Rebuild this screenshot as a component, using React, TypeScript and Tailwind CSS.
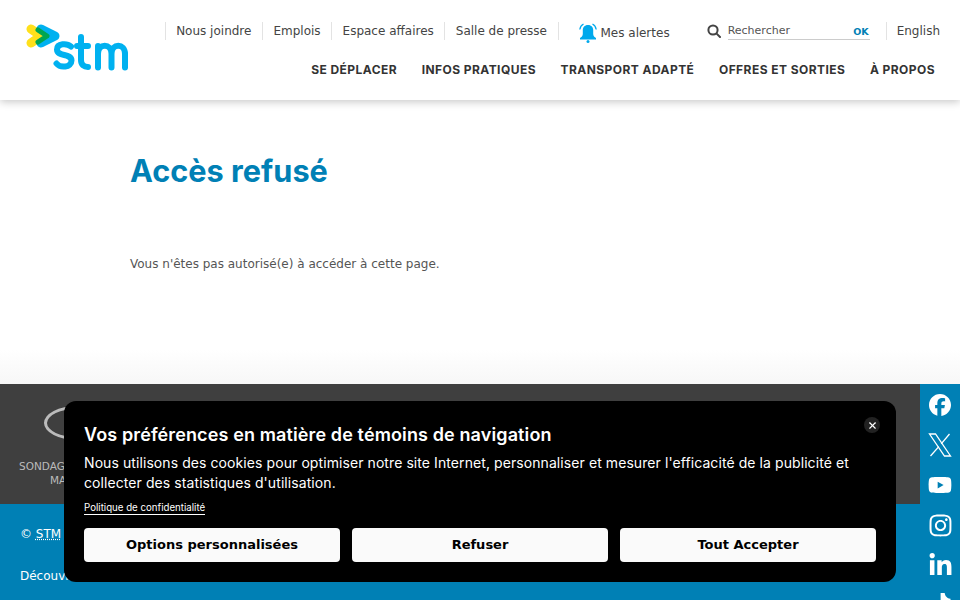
import { FaFacebook, FaInstagram, FaLinkedinIn, FaTiktok, FaYoutube } from 'react-icons/fa6'
import { X } from 'lucide-react'

const sans = 'font-["DejaVu_Sans",sans-serif]'

const topLinks = ['Nous joindre', 'Emplois', 'Espace affaires', 'Salle de presse']
const mainLinks = ['SE DÉPLACER', 'INFOS PRATIQUES', 'TRANSPORT ADAPTÉ', 'OFFRES ET SORTIES', 'À PROPOS']

function Logo() {
  return (
    <svg width="104" height="50" viewBox="0 0 104 50" className="shrink-0" fill="none" strokeLinecap="round" strokeLinejoin="round">
      <path d="M6 7 L16 14 L6 21" stroke="#ffe01b" strokeWidth="9" />
      <path d="M16 7 L30 14 L16 21" stroke="#00b1f0" strokeWidth="9" />
      <path d="M13 8 L22 14 L13 20" stroke="#00a651" strokeWidth="5" />
      <g stroke="#00b1f0" strokeWidth="6">
        <path d="M46 24.5 C42 21 32 21 32 27.5 C32 35 46.5 31 46.5 38.5 C46.5 46 35 46 31.5 41.5" />
        <path d="M56 15 L56 38 C56 43 59 45 63 45 M52 24 L63 24" />
        <path d="M73 45.5 L73 24 M73 32 C73 21 86.5 21 86.5 32 L86.5 45.5 M86.5 32 C86.5 21 100 21 100 32 L100 45.5" />
      </g>
    </svg>
  )
}

function Bell() {
  return (
    <svg width="18" height="20" viewBox="0 0 18 20" fill="#00a9ec">
      <path d="M9 2 C5.5 2 3.8 4.5 3.8 7 L3.8 11 C3.8 13 2.5 14 1 15 L1 16.5 L17 16.5 L17 15 C15.5 14 14.2 13 14.2 11 L14.2 7 C14.2 4.5 12.5 2 9 2 Z" />
      <circle cx="9" cy="18.5" r="1.5" />
      <path d="M4.5 1 C2.5 2 1.2 4 .8 6.5 M13.5 1 C15.5 2 16.8 4 17.2 6.5" fill="none" stroke="#00a9ec" strokeWidth="1.3" />
    </svg>
  )
}

function SearchIcon() {
  return (
    <svg width="14" height="14" viewBox="0 0 14 14" fill="none" stroke="#444" strokeWidth="2" strokeLinecap="round" className="ml-[37px] shrink-0">
      <circle cx="6" cy="6" r="4.6" />
      <path d="M9.6 9.6 L13 13" />
    </svg>
  )
}

function XLogo() {
  return (
    <svg width="24" height="24" viewBox="0 0 24 24" fill="none" stroke="#fff" strokeWidth="1.3">
      <path d="M1.5 1 L7.5 1 L22.5 23 L16.5 23 Z" />
      <path d="M21.5 1 L13.2 10.8 M10.8 13.6 L2.5 23" />
    </svg>
  )
}

const socials = [
  <FaFacebook key="facebook" size={22} />,
  <XLogo key="x" />,
  <FaYoutube key="youtube" size={24} />,
  <FaInstagram key="instagram" size={25} />,
  <FaLinkedinIn key="linkedin" size={25} />,
  <FaTiktok key="tiktok" size={24} />,
]

export default function App() {
  return (
    <div className={`relative h-[600px] w-[960px] overflow-hidden bg-white ${sans}`}>
      <header className="relative z-10 flex h-[100px] justify-between bg-white pl-[25px] pr-5 pt-[22px] shadow-[0_2px_8px_rgba(0,0,0,0.22)]">
        <Logo />
        <div className="flex flex-col items-end">
          <div className="flex h-[18px] items-center text-[12px] text-[#444]">
            {topLinks.map((link, i) => (
              <span key={link} className={`flex h-[18px] items-center border-l border-[#e3e3e3] px-[10.5px] ${i === 3 ? 'border-r' : ''}`}>
                {link}
              </span>
            ))}
            <span className="ml-5 mt-[3px] flex items-center gap-1">
              <Bell />
              Mes alertes
            </span>
            <SearchIcon />
            <div className="ml-[7px] flex h-[18px] w-[142px] items-center justify-between border-b border-[#ccc] text-[11px] text-[#555]">
              <span className="mt-[1px]">Rechercher</span>
              <span className="mt-[3px] pr-[1px] text-[9.5px] font-bold text-[#0080b5]">OK</span>
            </div>
            <span className="ml-4 flex h-[18px] items-center border-l border-[#e3e3e3] pl-[10px]">English</span>
          </div>
          <nav className='mt-[21px] flex gap-[24.6px] pr-[5px] font-["Inter",sans-serif] text-[12px] font-bold tracking-[0.44px] text-[#333]'>
            {mainLinks.map((link) => (
              <span key={link}>{link}</span>
            ))}
          </nav>
        </div>
      </header>

      <main className="h-[284px] bg-gradient-to-b from-white from-[88%] to-[#f7f7f7] pl-[130px] pt-[50px]">
        <h1 className='font-["Inter",sans-serif] text-[30.7px] font-bold leading-[42px] text-[#0080b5]'>Accès refusé</h1>
        <p className="mt-[63px] text-[12px] text-[#555]">Vous n'êtes pas autorisé(e) à accéder à cette page.</p>
      </main>

      <footer className="relative flex h-[216px]">
        <div className="flex-1">
          <div className="h-[120px] bg-[#3f3f3f] pt-[22px] text-[10.5px] leading-[14px] text-[#bbb]">
            <div className="ml-[44px] h-[34px] w-[66px] rounded-[50%] border-[3px] border-[#bbb]" />
            <div className="mt-[19px] pl-[19px]">SONDAGE</div>
            <div className="pl-[50px]">MA</div>
          </div>
          <div className="h-[96px] bg-[#0080b5] pl-5 pt-[21px] text-[12px] text-white">
            <p>
              © <span className="underline decoration-dotted">STM</span>
            </p>
            <p className="mt-[24px]">Découvrez</p>
          </div>
        </div>
        <aside className="flex w-10 flex-col items-center bg-[#0080b5] pt-[1px] text-white">
          {socials.map((icon) => (
            <div key={icon.key} className="flex h-10 w-10 shrink-0 items-center justify-center">
              {icon}
            </div>
          ))}
        </aside>
      </footer>

      <div className='absolute left-16 top-[401px] z-20 h-[181px] w-[832px] rounded-xl bg-black px-5 pt-[21px] font-["Inter",sans-serif] text-white'>
        <button className="absolute right-4 top-4 flex size-4 items-center justify-center rounded-full bg-[#222]">
          <X size={11} strokeWidth={2.5} />
        </button>
        <h2 className="text-[18px] font-semibold leading-[26px] tracking-[0.12px]">Vos préférences en matière de témoins de navigation</h2>
        <p className="mt-[5px] text-[14px] leading-5 tracking-[0.08px]">
          Nous utilisons des cookies pour optimiser notre site Internet, personnaliser et mesurer l'efficacité de la publicité et collecter des statistiques d'utilisation.
        </p>
        <a className="mt-[8px] inline-block border-b border-white text-[9.7px] leading-[12px]">Politique de confidentialité</a>
        <div className={`mt-[11px] grid grid-cols-3 gap-3 text-[13px] font-bold text-black ${sans}`}>
          {['Options personnalisées', 'Refuser', 'Tout Accepter'].map((label) => (
            <button key={label} className="h-[34px] rounded-[4px] bg-[#fafafa]">
              {label}
            </button>
          ))}
        </div>
      </div>
    </div>
  )
}
